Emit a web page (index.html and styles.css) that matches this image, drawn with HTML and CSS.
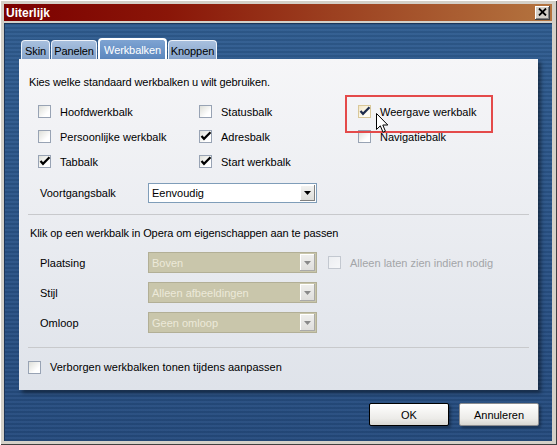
FILE: index.html
```html
<!DOCTYPE html>
<html lang="nl">
<head>
<meta charset="utf-8">
<title>Uiterlijk</title>
<link rel="stylesheet" href="styles.css">
</head>
<body>
<div class="window">
  <div class="titlebar">
    <span class="title">Uiterlijk</span>
    <span class="close"><svg width="9" height="8" viewBox="0 0 9 8"><path d="M1 0.5 L8 7.5 M8 0.5 L1 7.5" stroke="#000" stroke-width="1.8" fill="none"/></svg></span>
  </div>
  <div class="client">
    <div class="tabs">
      <span class="tab t-skin">Skin</span>
      <span class="tab t-panelen">Panelen</span>
      <span class="tab active t-werk">Werkbalken</span>
      <span class="tab t-knoppen">Knoppen</span>
    </div>
    <div class="panel">
      <p class="intro">Kies welke standaard werkbalken u wilt gebruiken.</p>
      <div class="checks">
        <label class="check"><span class="box"></span>Hoofdwerkbalk</label>
        <label class="check"><span class="box"></span>Statusbalk</label>
        <label class="check"><span class="box hover"><svg width="13" height="13" viewBox="0 0 13 13"><path d="M2.5 6 L5 8.8 L11.5 2.2" stroke="#1f2d4d" stroke-width="2.2" fill="none"/></svg></span>Weergave werkbalk</label>
        <label class="check"><span class="box"></span>Persoonlijke werkbalk</label>
        <label class="check"><span class="box"><svg width="13" height="13" viewBox="0 0 13 13"><path d="M2.5 6 L5 8.8 L11.5 2.2" stroke="#000" stroke-width="2.2" fill="none"/></svg></span>Adresbalk</label>
        <label class="check"><span class="box"></span>Navigatiebalk</label>
        <label class="check"><span class="box"><svg width="13" height="13" viewBox="0 0 13 13"><path d="M2.5 6 L5 8.8 L11.5 2.2" stroke="#000" stroke-width="2.2" fill="none"/></svg></span>Tabbalk</label>
        <label class="check"><span class="box"><svg width="13" height="13" viewBox="0 0 13 13"><path d="M2.5 6 L5 8.8 L11.5 2.2" stroke="#000" stroke-width="2.2" fill="none"/></svg></span>Start werkbalk</label>
      </div>
      <div class="field progress">
        <span class="flabel">Voortgangsbalk</span>
        <span class="select"><span>Eenvoudig</span><span class="dbtn"><svg width="7" height="4" viewBox="0 0 7 4"><path d="M0 0 H7 L3.5 4 Z" fill="#000"/></svg></span></span>
      </div>
      <div class="sep"></div>
      <p class="intro intro2">Klik op een werkbalk in Opera om eigenschappen aan te passen</p>
      <div class="rows">
        <div class="field">
          <span class="flabel">Plaatsing</span>
          <span class="select disabled"><span>Boven</span><span class="dbtn"><svg width="7" height="4" viewBox="0 0 7 4"><path d="M0 0 H7 L3.5 4 Z" fill="#8a8a8a"/></svg></span></span>
          <label class="check dis"><span class="box"></span>Alleen laten zien indien nodig</label>
        </div>
        <div class="field">
          <span class="flabel">Stijl</span>
          <span class="select disabled"><span>Alleen afbeeldingen</span><span class="dbtn"><svg width="7" height="4" viewBox="0 0 7 4"><path d="M0 0 H7 L3.5 4 Z" fill="#8a8a8a"/></svg></span></span>
        </div>
        <div class="field">
          <span class="flabel">Omloop</span>
          <span class="select disabled"><span>Geen omloop</span><span class="dbtn"><svg width="7" height="4" viewBox="0 0 7 4"><path d="M0 0 H7 L3.5 4 Z" fill="#8a8a8a"/></svg></span></span>
        </div>
      </div>
      <div class="sep sep2"></div>
      <label class="check bottom"><span class="box"></span>Verborgen werkbalken tonen tijdens aanpassen</label>

      <div class="highlight"></div>
      <svg class="cursor" width="13" height="21" viewBox="0 0 13 21"><path d="M0.5 0.5 L0.5 16.5 L4.3 12.8 L7 19.2 L9.4 18.2 L6.8 12 L11.8 12 Z" fill="#fff" stroke="#000" stroke-width="1"/></svg>
    </div>
    <div class="buttons">
      <span class="button default">OK</span>
      <span class="button">Annuleren</span>
    </div>
  </div>
</div>
</body>
</html>
```

FILE: styles.css
```css
body {
  margin: 0;
  font-family: "Liberation Sans", Arial, sans-serif;
  font-size: 11px;
  color: #000;
}

.window {
  width: 557px;
  height: 445px;
  box-sizing: border-box;
  background: #d4d0c8;
  padding: 4px 5px 4px 4px;
  display: flex;
  flex-direction: column;
  box-shadow: inset 1px 1px #ffffff, inset -1px -1px #404040;
}

.titlebar {
  height: 17px;
  margin-bottom: 2px;
  background: linear-gradient(to right, #7c0000 0%, #8a1608 30%, #9c4020 60%, #b4743f 100%);
  display: flex;
  align-items: center;
  justify-content: space-between;
  padding: 0 2px 0 2px;
}

.title {
  color: #fff;
  font-weight: bold;
  font-size: 12px;
}

.close {
  width: 15px;
  height: 14px;
  box-sizing: border-box;
  background: #d4d0c8;
  box-shadow: inset -1px -1px #404040, inset 1px 1px #ffffff, inset -2px -2px #808080;
  display: flex;
  align-items: center;
  justify-content: center;
  padding: 0 1px 1px 0;
}

.close svg { display: block; }

.client {
  flex: 1;
  display: flex;
  flex-direction: column;
  padding: 15px 13px 0 15px;
  background:
    repeating-linear-gradient(to bottom, rgba(0, 0, 0, 0.07) 0 2px, rgba(255, 255, 255, 0.03) 2px 4px),
    linear-gradient(#2f5c90, #254b7e);
  box-shadow: inset 1px 1px #1c3558;
}

.tabs {
  display: flex;
  align-items: flex-end;
  gap: 1px;
  height: 21px;
  padding-left: 2px;
}

.tab {
  height: 19px;
  box-sizing: border-box;
  padding-top: 3px;
  text-align: center;
  white-space: nowrap;
  border: 1px solid #eef3fa;
  border-bottom: none;
  border-radius: 4px 4px 0 0;
  background: linear-gradient(#a8c0de, #86a4cb);
  color: #000;
  line-height: 14px;
  letter-spacing: -0.1px;
}

.t-skin { width: 29px; }
.t-panelen { width: 46px; }
.t-werk { width: 69px; }
.t-knoppen { width: 49px; }

.tab.active {
  height: 21px;
  border: 2px solid #ffffff;
  border-bottom: none;
  background: linear-gradient(#7ea3d2, #5b87be);
  color: #fff;
}

.panel {
  position: relative;
  width: 519px;
  height: 331px;
  box-sizing: border-box;
  padding-top: 16px;
  background: linear-gradient(#f6f6f8, #dfe3ea);
  box-shadow: 3px 3px 4px rgba(0, 0, 0, 0.45);
}

.intro {
  margin: 0 0 0 10px;
  line-height: 14px;
  letter-spacing: -0.1px;
}

.checks {
  display: grid;
  grid-template-columns: 161px 159px auto;
  grid-auto-rows: 25px;
  align-items: center;
  margin-top: 10px;
  padding-left: 19px;
}

.check {
  display: flex;
  align-items: center;
  gap: 9px;
  line-height: 14px;
}

.box {
  position: relative;
  flex: none;
  width: 13px;
  height: 13px;
  box-sizing: border-box;
  border: 1px solid #98a3b4;
  background: linear-gradient(135deg, #dedfd9 0%, #ffffff 70%);
}

.box.hover {
  border-color: #d9c89a;
  background: linear-gradient(135deg, #f3e6c6 0%, #fffdf4 70%);
}

.box svg {
  position: absolute;
  left: -1px;
  top: -1px;
  overflow: visible;
}

.field {
  display: flex;
  align-items: center;
  padding-left: 21px;
}

.flabel {
  width: 108px;
  flex: none;
}

.progress {
  margin-top: 9px;
  height: 20px;
}

.select {
  width: 169px;
  height: 20px;
  box-sizing: border-box;
  border: 1px solid #7f9db9;
  background: #fff;
  display: flex;
  align-items: center;
  justify-content: space-between;
  padding: 0 1px 0 3px;
}

.dbtn {
  width: 15px;
  height: 16px;
  box-sizing: border-box;
  background: linear-gradient(#f4f4f2, #dcdcd8);
  box-shadow: inset -1px -1px #808080, inset 1px 1px #ffffff;
  display: flex;
  align-items: center;
  justify-content: center;
}

.dbtn svg { display: block; }

.select.disabled {
  height: 21px;
  background: #c9c6ab;
  border-color: #b2af96;
  color: #ece9d9;
}

.select.disabled .dbtn {
  height: 17px;
  background: linear-gradient(#f0f0ee, #dedddb);
  box-shadow: inset -1px -1px #a9a9a9, inset 1px 1px #ffffff;
}

.sep {
  height: 1px;
  background: #c8c9cc;
  margin: 11px 9px 0;
}

.intro2 {
  margin-top: 11px;
  margin-left: 11px;
}

.rows {
  display: flex;
  flex-direction: column;
  gap: 9px;
  margin-top: 12px;
}

.check.dis {
  margin-left: 11px;
  color: #a3a5a8;
}

.check.dis .box {
  border-color: #c3c8d0;
  background: linear-gradient(135deg, #eceef1, #f6f7f9);
}

.sep2 {
  margin-top: 14px;
}

.check.bottom {
  margin: 12px 0 0 9px;
}

.highlight {
  position: absolute;
  left: 326px;
  top: 36px;
  width: 148px;
  height: 38px;
  box-sizing: border-box;
  border: 2px solid #e44a4a;
}

.cursor {
  position: absolute;
  left: 357px;
  top: 54px;
}

.buttons {
  display: flex;
  justify-content: flex-end;
  gap: 10px;
  margin-top: 13px;
}

.button {
  width: 80px;
  height: 23px;
  box-sizing: border-box;
  border: 1px solid #8b8c8f;
  border-radius: 2px;
  background: linear-gradient(#ffffff, #ecebe8 70%, #d8d7d2);
  display: flex;
  align-items: center;
  justify-content: center;
  box-shadow: 2px 2px 3px rgba(0, 0, 0, 0.35);
}

.button.default {
  border-color: #000;
}
```
